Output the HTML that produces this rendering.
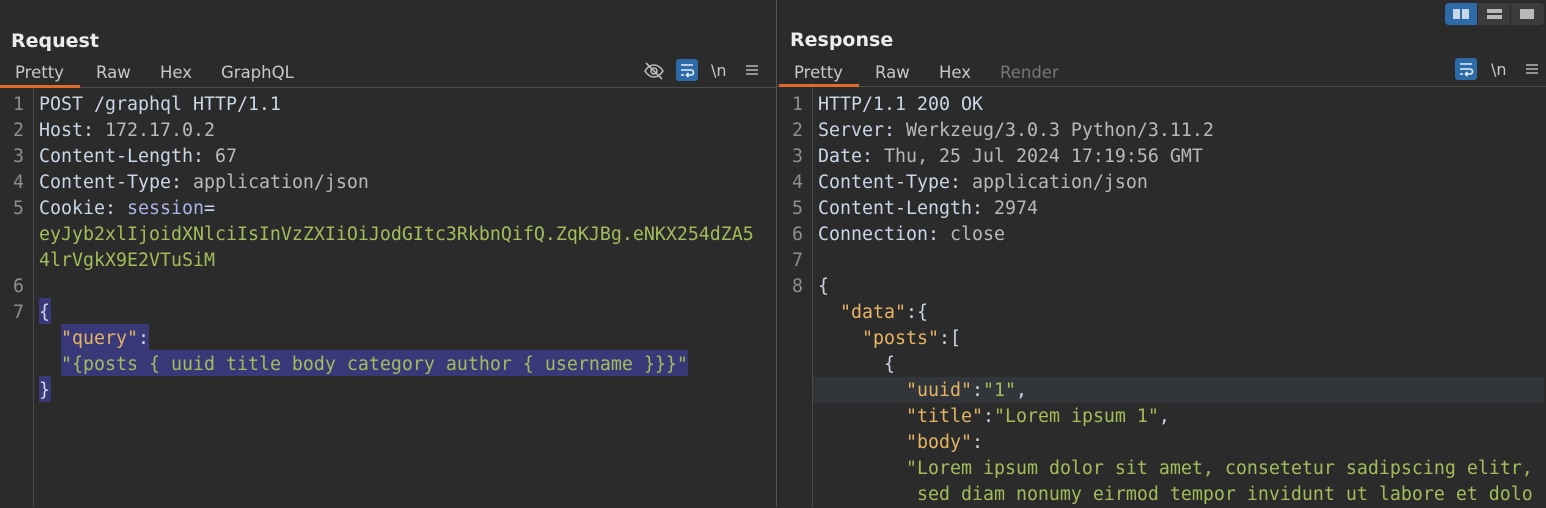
<!DOCTYPE html>
<html><head><meta charset="utf-8"><style>
body{margin:0;width:1546px;height:507px;background:#2b2b2b;overflow:hidden;position:relative;font-family:"DejaVu Sans","Liberation Sans",sans-serif;}
.abs{position:absolute}
.title{font-weight:bold;font-size:19px;color:#ececec;top:30px}
.tab{font-size:16.5px;color:#c8c8c8;top:63px}
.tab.dis{color:#777}
.code{font-family:"DejaVu Sans Mono","Liberation Mono",monospace;font-size:18.27px;line-height:26px;white-space:pre;color:#c9d7e6}
.ln{font-family:"DejaVu Sans Mono","Liberation Mono",monospace;font-size:18.27px;line-height:26px;color:#8e8e8e;text-align:right;width:16px}
.k{color:#c9d7e6}.v{color:#b9b9b9}.p{color:#aab4ea}.g{color:#a3bd5a}.o{color:#e6b562}.w{color:#c9d7e6}
.sel{background:#39397a}
</style></head><body>
<div class="abs" style="left:776px;top:0;width:1px;height:507px;background:#555"></div>
<div class="abs" style="left:1445px;top:3px;width:99px;height:22px;background:#3c3c3c;border-radius:4px"></div>
<div class="abs" style="left:1445px;top:3px;width:32px;height:22px;background:#2d6aa8;border-radius:4px 0 0 4px"></div>
<div class="abs" style="left:1453px;top:9px;width:7px;height:10px;background:#c8d6e6"></div>
<div class="abs" style="left:1462px;top:9px;width:7px;height:10px;background:#c8d6e6"></div>
<div class="abs" style="left:1477px;top:3px;width:1px;height:22px;background:#2b2b2b"></div>
<div class="abs" style="left:1487px;top:9px;width:15px;height:4px;background:#b8b8b8"></div>
<div class="abs" style="left:1487px;top:15px;width:15px;height:4px;background:#b8b8b8"></div>
<div class="abs" style="left:1510px;top:3px;width:1px;height:22px;background:#2b2b2b"></div>
<div class="abs" style="left:1520px;top:9px;width:14px;height:10px;background:#b8b8b8"></div>

<div class="abs title" style="left:11px">Request</div>
<div class="abs tab" style="left:15px">Pretty</div>
<div class="abs tab" style="left:96px">Raw</div>
<div class="abs tab" style="left:160px">Hex</div>
<div class="abs tab" style="left:221px">GraphQL</div>
<div class="abs" style="left:0;top:87px;width:776px;height:1px;background:#4a4a4a"></div>
<div class="abs" style="left:0;top:85px;width:80px;height:3px;background:#e0692c"></div>
<svg class="abs" style="left:643px;top:60px" width="22" height="22" viewBox="0 0 22 22" fill="none" stroke="#b8b8b8" stroke-width="1.6"><path d="M2 11c2.5-4 5.5-6 9-6s6.5 2 9 6c-2.5 4-5.5 6-9 6s-6.5-2-9-6z"/><circle cx="11" cy="11" r="3"/><path d="M3 3l16 16"/></svg>
<div class="abs" style="left:676px;top:59px;width:22px;height:22px;background:#2d6aa8;border-radius:3px"></div>
<svg class="abs" style="left:676px;top:59px" width="22" height="22" viewBox="0 0 22 22" fill="none" stroke="#e8eef6" stroke-width="1.6"><path d="M5 6h12M5 11h10a2.5 2.5 0 0 1 0 5h-4M5 16h3"/><path d="M12.5 14l-2 2 2 2"/></svg>
<div class="abs" style="left:711px;top:61px;color:#c8c8c8;font-size:16px">\n</div>
<svg class="abs" style="left:744px;top:63px" width="16" height="14" stroke="#b8b8b8" stroke-width="1.6"><path d="M2 3h12M2 7h12M2 11h12"/></svg>
<div class="abs" style="left:33px;top:88px;width:1px;height:419px;background:#4a4a4a"></div>
<div class="abs sel" style="left:39px;top:298px;width:12px;height:26px"></div>
<div class="abs sel" style="left:61px;top:324px;width:88px;height:26px"></div>
<div class="abs sel" style="left:61px;top:350px;width:627px;height:26px"></div>
<div class="abs sel" style="left:39px;top:376px;width:12px;height:26px"></div>
<div class="abs ln" style="left:8px;top:92px">1<br>2<br>3<br>4<br>5<br><br><br>6<br>7</div>
<div class="abs code" style="left:39px;top:92px"><span class="k">POST /graphql HTTP/1.1</span>
<span class="k">Host: </span><span class="v">172.17.0.2</span>
<span class="k">Content-Length: </span><span class="v">67</span>
<span class="k">Content-Type: </span><span class="v">application/json</span>
<span class="k">Cookie: </span><span class="p">session</span><span class="k">=</span>
<span class="g">eyJyb2xlIjoidXNlciIsInVzZXIiOiJodGItc3RkbnQifQ.ZqKJBg.eNKX254dZA5</span>
<span class="g">4lrVgkX9E2VTuSiM</span>

<span class="w">{</span>
  <span class="o">"query"</span><span class="w">:</span>
  <span class="g">"{posts { uuid title body category author { username }}}"</span>
<span class="w">}</span></div>

<div class="abs title" style="left:790px;top:29px">Response</div>
<div class="abs tab" style="left:794px">Pretty</div>
<div class="abs tab" style="left:875px">Raw</div>
<div class="abs tab" style="left:939px">Hex</div>
<div class="abs tab dis" style="left:1000px">Render</div>
<div class="abs" style="left:777px;top:86px;width:769px;height:1px;background:#4a4a4a"></div>
<div class="abs" style="left:779px;top:84px;width:80px;height:3px;background:#e0692c"></div>
<div class="abs" style="left:1455px;top:58px;width:22px;height:22px;background:#2d6aa8;border-radius:3px"></div>
<svg class="abs" style="left:1455px;top:58px" width="22" height="22" viewBox="0 0 22 22" fill="none" stroke="#e8eef6" stroke-width="1.6"><path d="M5 6h12M5 11h10a2.5 2.5 0 0 1 0 5h-4M5 16h3"/><path d="M12.5 14l-2 2 2 2"/></svg>
<div class="abs" style="left:1491px;top:60px;color:#c8c8c8;font-size:16px">\n</div>
<svg class="abs" style="left:1524px;top:62px" width="16" height="14" stroke="#b8b8b8" stroke-width="1.6"><path d="M2 3h12M2 7h12M2 11h12"/></svg>
<div class="abs" style="left:812px;top:87px;width:1px;height:420px;background:#4a4a4a"></div>
<div class="abs" style="left:813px;top:377px;width:731px;height:26px;background:#323539"></div>
<div class="abs ln" style="left:787px;top:92px">1<br>2<br>3<br>4<br>5<br>6<br>7<br>8</div>
<div class="abs code" style="left:818px;top:92px"><span class="k">HTTP/1.1 200 OK</span>
<span class="k">Server: </span><span class="v">Werkzeug/3.0.3 Python/3.11.2</span>
<span class="k">Date: </span><span class="v">Thu, 25 Jul 2024 17:19:56 GMT</span>
<span class="k">Content-Type: </span><span class="v">application/json</span>
<span class="k">Content-Length: </span><span class="v">2974</span>
<span class="k">Connection: </span><span class="v">close</span>

<span class="w">{</span>
  <span class="o">"data"</span><span class="w">:{</span>
    <span class="o">"posts"</span><span class="w">:[</span>
      <span class="w">{</span>
        <span class="o">"uuid"</span><span class="w">:</span><span class="g">"1"</span><span class="w">,</span>
        <span class="o">"title"</span><span class="w">:</span><span class="g">"Lorem ipsum 1"</span><span class="w">,</span>
        <span class="o">"body"</span><span class="w">:</span>
        <span class="g">"Lorem ipsum dolor sit amet, consetetur sadipscing elitr,</span>
<span class="g">         sed diam nonumy eirmod tempor invidunt ut labore et dolo</span></div>
</body></html>
